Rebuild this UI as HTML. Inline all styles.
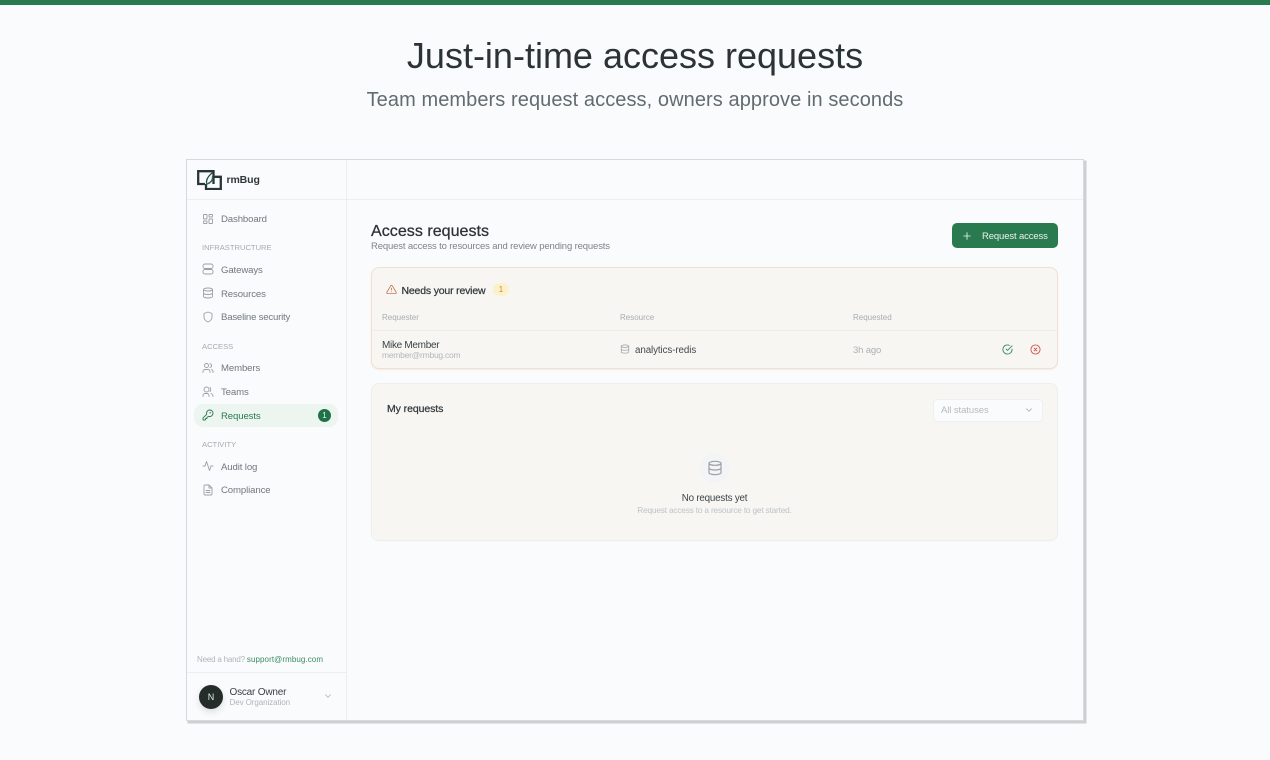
<!DOCTYPE html>
<html><head><meta charset="utf-8"><style>
html,body{margin:0;padding:0;width:1270px;height:760px;overflow:hidden;background:#fafbfd;font-family:"Liberation Sans",sans-serif}
.a{position:absolute;white-space:nowrap}
#top{left:0;top:0;width:1270px;height:5px;background:#2a7a50}
h1{margin:0;left:0;width:1270px;text-align:center;top:35px;font-size:36px;line-height:42px;font-weight:400;color:#2c3336}
h2{margin:0;left:0;width:1270px;text-align:center;top:87px;font-size:20px;line-height:26px;font-weight:400;color:#626c70;letter-spacing:.08px}
#frame{left:186px;top:159px;width:896px;height:560px;border:1px solid #d6d9dd;background:#fafbfd;box-shadow:2px 2px 0 .5px #cdcfd0;overflow:hidden}
#in{position:absolute;left:-187px;top:-160px;width:1270px;height:760px;filter:blur(.3px)}
.nav{font-size:9.6px;line-height:12px;color:#71787e;letter-spacing:-.12px}
.sec{font-size:7.6px;line-height:10px;color:#a5abaf;left:202px}
svg{position:absolute;fill:none;stroke-linecap:round;stroke-linejoin:round}
.ic{stroke:#9aa1a6;stroke-width:1.8}
.th{font-size:8px;line-height:10px;color:#a8acaf}
</style></head><body>
<div class="a" id="top"></div>
<h1 class="a">Just-in-time access requests</h1>
<h2 class="a">Team members request access, owners approve in seconds</h2>
<div class="a" id="frame"><div id="in">
<div class="a" style="left:346px;top:160px;width:1px;height:560px;background:#eceef0"></div>
<div class="a" style="left:187px;top:199px;width:896px;height:1px;background:#eceef0"></div>
<div class="a" style="left:187px;top:672px;width:159px;height:1px;background:#eceef0"></div>

<svg style="left:197px;top:170px" width="25" height="20" viewBox="0 0 25 20"><path d="M8 14H1.200V1.200H16.500V6M16.500 14V6.800H23.800V19H9V14" stroke="#2b3437" stroke-width="2.300" stroke-linecap="butt" stroke-linejoin="miter"/><path d="M9.500 13Q9 8 15 3" stroke="#2b4a42" stroke-width="1.300"/><path d="M10 14Q16 12 15.500 6.500" stroke="#2a6a50" stroke-width="1.300"/></svg>
<div class="a" style="left:226.500px;top:173px;font-size:10.500px;line-height:14px;font-weight:700;color:#30373a;letter-spacing:-.12px">rmBug</div>

<svg class="ic" style="left:202px;top:213px" width="12" height="12" viewBox="0 0 24 24"><rect x="3" y="3" width="7" height="9" rx="1"/><rect x="14" y="3" width="7" height="5" rx="1"/><rect x="14" y="12" width="7" height="9" rx="1"/><rect x="3" y="16" width="7" height="5" rx="1"/></svg>
<div class="a nav" style="left:221px;top:214px">Dashboard</div>
<div class="a sec" style="top:243px">INFRASTRUCTURE</div>
<svg class="ic" style="left:202px;top:263px" width="12" height="12" viewBox="0 0 24 24"><rect x="2" y="2" width="20" height="9" rx="4"/><rect x="2" y="13" width="20" height="9" rx="4"/></svg>
<div class="a nav" style="left:221px;top:265px">Gateways</div>
<svg class="ic" style="left:202px;top:287px" width="12" height="12" viewBox="0 0 24 24"><ellipse cx="12" cy="5" rx="9" ry="3"/><path d="M3 5v14c0 1.700 4 3 9 3s9-1.300 9-3V5M3 12c0 1.700 4 3 9 3s9-1.300 9-3"/></svg>
<div class="a nav" style="left:221px;top:289px">Resources</div>
<svg class="ic" style="left:202px;top:311px" width="12" height="12" viewBox="0 0 24 24"><path d="M12 22s8-3 8-10V5l-8-3-8 3v7c0 7 8 10 8 10z"/></svg>
<div class="a nav" style="left:221px;top:312px;letter-spacing:-.2px">Baseline security</div>
<div class="a sec" style="top:342px">ACCESS</div>
<svg class="ic" style="left:202px;top:362px" width="12" height="12" viewBox="0 0 24 24"><path d="M16 21v-2a4 4 0 0 0-4-4H6a4 4 0 0 0-4 4v2"/><circle cx="9" cy="7" r="4"/><path d="M22 21v-2a4 4 0 0 0-3-3.900M16 3.100a4 4 0 0 1 0 7.800"/></svg>
<div class="a nav" style="left:221px;top:363px">Members</div>
<svg class="ic" style="left:202px;top:386px" width="12" height="12" viewBox="0 0 24 24"><path d="M14 21v-2a4 4 0 0 0-4-4H6a4 4 0 0 0-4 4v2"/><circle cx="9" cy="7" r="5"/><path d="M22 21c0-3-1-5-4-6M16 3c2 2 2 6 0 8"/></svg>
<div class="a nav" style="left:221px;top:387px">Teams</div>
<div class="a" style="left:194px;top:404px;width:144px;height:23px;border-radius:9px;background:#edf5f0"></div>
<svg style="left:202px;top:409px;stroke:#2a7a50;stroke-width:1.900" width="12" height="12" viewBox="0 0 24 24"><path d="M2.586 17.414A2 2 0 0 0 2 18.828V21a1 1 0 0 0 1 1h3a1 1 0 0 0 1-1v-1a1 1 0 0 1 1-1h1a1 1 0 0 0 1-1v-1a1 1 0 0 1 1-1h.172a2 2 0 0 0 1.414-.586l.814-.814a6.500 6.500 0 1 0-4-4z"/><circle cx="16.500" cy="7.500" r=".5"/></svg>
<div class="a nav" style="left:221px;top:411px;color:#2a7a50">Requests</div>
<div class="a" style="left:318px;top:409px;width:13px;height:13px;border-radius:50%;background:#1f7146;color:#e8f3ec;font-size:8px;line-height:13px;text-align:center">1</div>
<div class="a sec" style="top:440px">ACTIVITY</div>
<svg class="ic" style="left:202px;top:460px" width="12" height="12" viewBox="0 0 24 24"><path d="M22 12h-4l-3 9L9 3l-3 9H2"/></svg>
<div class="a nav" style="left:221px;top:462px">Audit log</div>
<svg class="ic" style="left:202px;top:484px" width="12" height="12" viewBox="0 0 24 24"><path d="M14 2H6a2 2 0 0 0-2 2v16a2 2 0 0 0 2 2h12a2 2 0 0 0 2-2V8z"/><path d="M14 2v6h6M8 13h8M8 17h8"/></svg>
<div class="a nav" style="left:221px;top:485px">Compliance</div>

<div class="a" style="left:197px;top:654px;font-size:8px;line-height:11px;color:#b0b5b8;letter-spacing:-.2px">Need a hand? <span style="color:#3d8a60;letter-spacing:.08px">support@rmbug.com</span></div>
<div class="a" style="left:199px;top:685px;width:24px;height:24px;border-radius:50%;background:#252d2b;color:#e8eaea;font-size:9px;line-height:24px;text-align:center;box-shadow:0 3px 7px rgba(0,0,0,.12)">N</div>
<div class="a" style="left:229.500px;top:686px;font-size:10px;line-height:13px;color:#3a4144;letter-spacing:-.2px">Oscar Owner</div>
<div class="a" style="left:229.500px;top:697px;font-size:8px;line-height:11px;color:#b0b5b8;letter-spacing:-.08px">Dev Organization</div>
<svg style="left:323px;top:691px;stroke:#b0b5b8;stroke-width:2" width="10" height="10" viewBox="0 0 24 24"><path d="M6 9l6 6 6-6"/></svg>

<div class="a" style="left:371px;top:221px;font-size:16.100px;line-height:20px;font-weight:400;color:#2b3235;-webkit-text-stroke:.25px #2b3235">Access requests</div>
<div class="a" style="left:371px;top:241px;font-size:9.500px;line-height:12px;color:#7c8387;letter-spacing:-.14px">Request access to resources and review pending requests</div>
<div class="a" style="left:952px;top:223px;width:106px;height:25px;border-radius:5px;background:#2a7a50"></div>
<svg style="left:962px;top:231px;stroke:#eef5f1;stroke-width:2" width="10" height="10" viewBox="0 0 24 24"><path d="M12 4v16M4 12h16"/></svg>
<div class="a" style="left:982px;top:231px;font-size:9.500px;line-height:12px;color:#e9f2ed;letter-spacing:-.13px">Request access</div>

<div class="a" style="left:371px;top:267px;width:685px;height:100px;border:1px solid #f0e0d2;border-radius:8px;background:#f7f6f3;box-shadow:0 1px 1px rgba(240,224,210,.5)"></div>
<svg style="left:386px;top:284px;stroke:#c57a50;stroke-width:1.900" width="11" height="11" viewBox="0 0 24 24"><path d="M10.300 3.900L1.800 18a2 2 0 0 0 1.700 3h17a2 2 0 0 0 1.700-3L13.700 3.900a2 2 0 0 0-3.400 0zM12 9v4M12 17h.01"/></svg>
<div class="a" style="left:401.500px;top:285px;font-size:10.500px;line-height:13px;font-weight:400;color:#33393c;-webkit-text-stroke:.25px #33393c;letter-spacing:-.18px">Needs your review</div>
<div class="a" style="left:493px;top:283px;width:16px;height:13px;border-radius:7px;background:#fdf1c9;color:#c98a3c;font-size:8px;line-height:13px;text-align:center">1</div>
<div class="a th" style="left:382px;top:313px">Requester</div>
<div class="a th" style="left:620px;top:313px">Resource</div>
<div class="a th" style="left:853px;top:313px">Requested</div>
<div class="a" style="left:372px;top:330px;width:685px;height:1px;background:#efedea"></div>
<div class="a" style="left:382px;top:339px;font-size:10px;line-height:13px;color:#3a4144;letter-spacing:-.3px">Mike Member</div>
<div class="a" style="left:382px;top:350px;font-size:8.500px;line-height:11px;color:#b3b7ba;letter-spacing:-.25px">member@rmbug.com</div>
<svg class="ic" style="left:620px;top:344px" width="10" height="10" viewBox="0 0 24 24"><ellipse cx="12" cy="5" rx="9" ry="3"/><path d="M3 5v14c0 1.700 4 3 9 3s9-1.300 9-3V5M3 12c0 1.700 4 3 9 3s9-1.300 9-3"/></svg>
<div class="a" style="left:635px;top:345px;font-size:9.800px;line-height:12px;color:#43494c;letter-spacing:-.1px">analytics-redis</div>
<div class="a" style="left:853px;top:345px;font-size:9.500px;line-height:12px;color:#adb1b4;letter-spacing:-.15px">3h ago</div>
<svg style="left:1002px;top:344px;stroke:#3d8a60;stroke-width:2" width="11" height="11" viewBox="0 0 24 24"><path d="M22 11.100V12a10 10 0 1 1-5.900-9.100"/><path d="M22 4L12 14l-3-3"/></svg>
<svg style="left:1030px;top:344px;stroke:#d0574e;stroke-width:2" width="11" height="11" viewBox="0 0 24 24"><circle cx="12" cy="12" r="10"/><path d="M15 9l-6 6M9 9l6 6"/></svg>

<div class="a" style="left:371px;top:383px;width:685px;height:156px;border:1px solid #efeeeb;border-radius:8px;background:#f7f6f3;box-shadow:0 1px 2px rgba(0,0,0,.02)"></div>
<div class="a" style="left:387px;top:403px;font-size:10.500px;line-height:13px;color:#33393c;-webkit-text-stroke:.25px #33393c;letter-spacing:-.08px">My requests</div>
<div class="a" style="left:933px;top:399px;width:108px;height:21px;border:1px solid #eeeff0;border-radius:4px;background:#fafbfc"></div>
<div class="a" style="left:941px;top:405px;font-size:9.500px;line-height:12px;color:#b6babd;letter-spacing:-.08px">All statuses</div>
<svg style="left:1024px;top:405px;stroke:#a8adb0;stroke-width:2" width="10" height="10" viewBox="0 0 24 24"><path d="M6 9l6 6 6-6"/></svg>
<div class="a" style="left:700px;top:453px;width:30px;height:30px;border-radius:50%;background:#f3f4f5"></div>
<svg class="ic" style="left:707px;top:460px" width="16" height="16" viewBox="0 0 24 24"><ellipse cx="12" cy="5" rx="9" ry="3"/><path d="M3 5v14c0 1.700 4 3 9 3s9-1.300 9-3V5M3 12c0 1.700 4 3 9 3s9-1.300 9-3"/></svg>
<div class="a" style="left:372px;width:685px;text-align:center;top:492px;font-size:9.800px;line-height:13px;color:#3e4447;letter-spacing:-.2px">No requests yet</div>
<div class="a" style="left:372px;width:685px;text-align:center;top:505px;font-size:8.300px;line-height:11px;color:#bfc2c5;letter-spacing:-.19px">Request access to a resource to get started.</div>
</div></div>
</body></html>
